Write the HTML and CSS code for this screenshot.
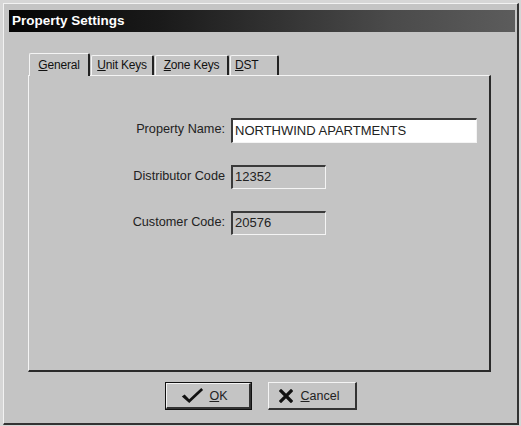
FILE: index.html
```html
<!DOCTYPE html>
<html>
<head>
<meta charset="utf-8">
<link rel="stylesheet" href="styles.css">
</head>
<body>
<div class="window">
  <div class="titlebar">Property Settings</div>
  <div class="tabs-area">
    <div class="tabstrip">
      <div class="tab tab-active tab-general"><u>G</u>eneral</div>
      <div class="tab tab-unit"><u>U</u>nit Keys</div>
      <div class="tab tab-zone"><u>Z</u>one Keys</div>
      <div class="tab tab-dst"><u>D</u>ST</div>
    </div>
    <div class="panel">
      <div class="form">
        <div class="label">Property Name:</div>
        <div class="field field-wide field-white">NORTHWIND APARTMENTS</div>
        <div class="label">Distributor Code</div>
        <div class="field field-short">12352</div>
        <div class="label">Customer Code:</div>
        <div class="field field-short">20576</div>
      </div>
    </div>
  </div>
  <div class="buttons">
    <div class="btn btn-default">
      <div class="btn-inner">
        <svg class="icon-check" width="24" height="17" viewBox="0 0 26 18"><path d="M2 10 L5 8 L10 13 L23 1 L25 3 L10 17 Z" fill="#111"/></svg>
        <span class="btn-text"><u>O</u>K</span>
      </div>
    </div>
    <div class="btn btn-cancel">
      <div class="btn-inner">
        <svg class="icon-x" width="14" height="14" viewBox="0 0 14 14"><path d="M2 2 L12 12 M12 2 L2 12" stroke="#111" stroke-width="3.2" stroke-linecap="square"/></svg>
        <span class="btn-text"><u>C</u>ancel</span>
      </div>
    </div>
  </div>
</div>
</body>
</html>
```
FILE: styles.css
```css
html, body {
  margin: 0;
  padding: 0;
}
body {
  background: #d6d6d6;
  font-family: "Liberation Sans", Arial, sans-serif;
  width: 521px;
  height: 426px;
  overflow: hidden;
}
.window {
  margin: 3px 0 0 3px;
  width: 516px;
  height: 422px;
  box-sizing: border-box;
  background: #c4c4c4;
  border-left: 1px solid #f2f2f2;
  border-top: 1px solid #f2f2f2;
  border-right: 2px solid #333;
  border-bottom: 2px solid #333;
  padding: 6px 2px 0 5px;
  display: flex;
  flex-direction: column;
}
.titlebar {
  height: 22px;
  line-height: 22px;
  background: linear-gradient(to right, #050505 0%, #1a1a1a 30%, #4a4a4a 75%, #5c5c5c 100%);
  color: #fff;
  font-weight: bold;
  font-size: 13.5px;
  padding-left: 3px;
}
.tabs-area {
  margin: 21px 0 0 19px;
  width: 463px;
}
.tabstrip {
  display: flex;
  align-items: flex-end;
  height: 22px;
  position: relative;
  z-index: 2;
}
.tab {
  box-sizing: border-box;
  height: 20px;
  font-size: 12px;
  color: #111;
  text-align: center;
  line-height: 19px;
  border-top: 1px solid #f4f4f4;
  border-left: 1px solid #f4f4f4;
  border-right: 2px solid #222;
  border-top-left-radius: 2px;
  border-top-right-radius: 2px;
  background: #c4c4c4;
  white-space: nowrap;
  letter-spacing: -0.2px;
}
.tab-active {
  height: 23px;
  margin-bottom: -1px;
  line-height: 22px;
}
.tab-general { width: 61px; margin-left: 1px; }
.tab-unit { width: 63px; margin-left: 1px; }
.tab-zone { width: 74px; margin-left: 1px; }
.tab-dst { width: 49px; margin-left: 1px; text-align: left; padding-left: 4px; }
.panel {
  box-sizing: border-box;
  height: 297px;
  background: #c4c4c4;
  border-top: 1px solid #f4f4f4;
  border-left: 1px solid #f4f4f4;
  border-right: 2px solid #2a2a2a;
  border-bottom: 2px solid #2a2a2a;
  padding-top: 42px;
}
.form {
  display: grid;
  grid-template-columns: 196px auto;
  column-gap: 6px;
  row-gap: 22px;
  align-items: center;
}
.label {
  text-align: right;
  font-size: 12.7px;
  color: #222;
  padding-bottom: 3px;
}
.field {
  box-sizing: border-box;
  height: 24px;
  border-top: 2px solid #3a3a3a;
  border-left: 2px solid #3a3a3a;
  border-right: 1px solid #f4f4f4;
  border-bottom: 1px solid #f4f4f4;
  font-size: 13px;
  color: #222;
  padding-left: 2px;
  line-height: 20px;
  background: #c4c4c4;
}
.field-wide { width: 246px; height: 25px; line-height: 21px; }
.field-short { width: 95px; }
.field-white { background: #fff; }
.buttons {
  display: flex;
  gap: 16px;
  margin: 10px 0 0 156px;
}
.btn {
  box-sizing: border-box;
  height: 28px;
  display: flex;
}
.btn-default {
  width: 87px;
  border: 1px solid #111;
}
.btn-cancel {
  width: 89px;
}
.btn-inner {
  flex: 1;
  display: flex;
  align-items: center;
  justify-content: center;
  border-top: 1px solid #f4f4f4;
  border-left: 1px solid #f4f4f4;
  border-right: 2px solid #333;
  border-bottom: 2px solid #333;
  background: #c4c4c4;
}
.btn-default .btn-inner {
  gap: 5px;
  padding-right: 8px;
}
.btn-cancel .btn-inner {
  gap: 8px;
  padding-right: 6px;
}
.btn-text {
  font-size: 12.5px;
  color: #222;
}
.icon-check, .icon-x {
  display: block;
}
```
